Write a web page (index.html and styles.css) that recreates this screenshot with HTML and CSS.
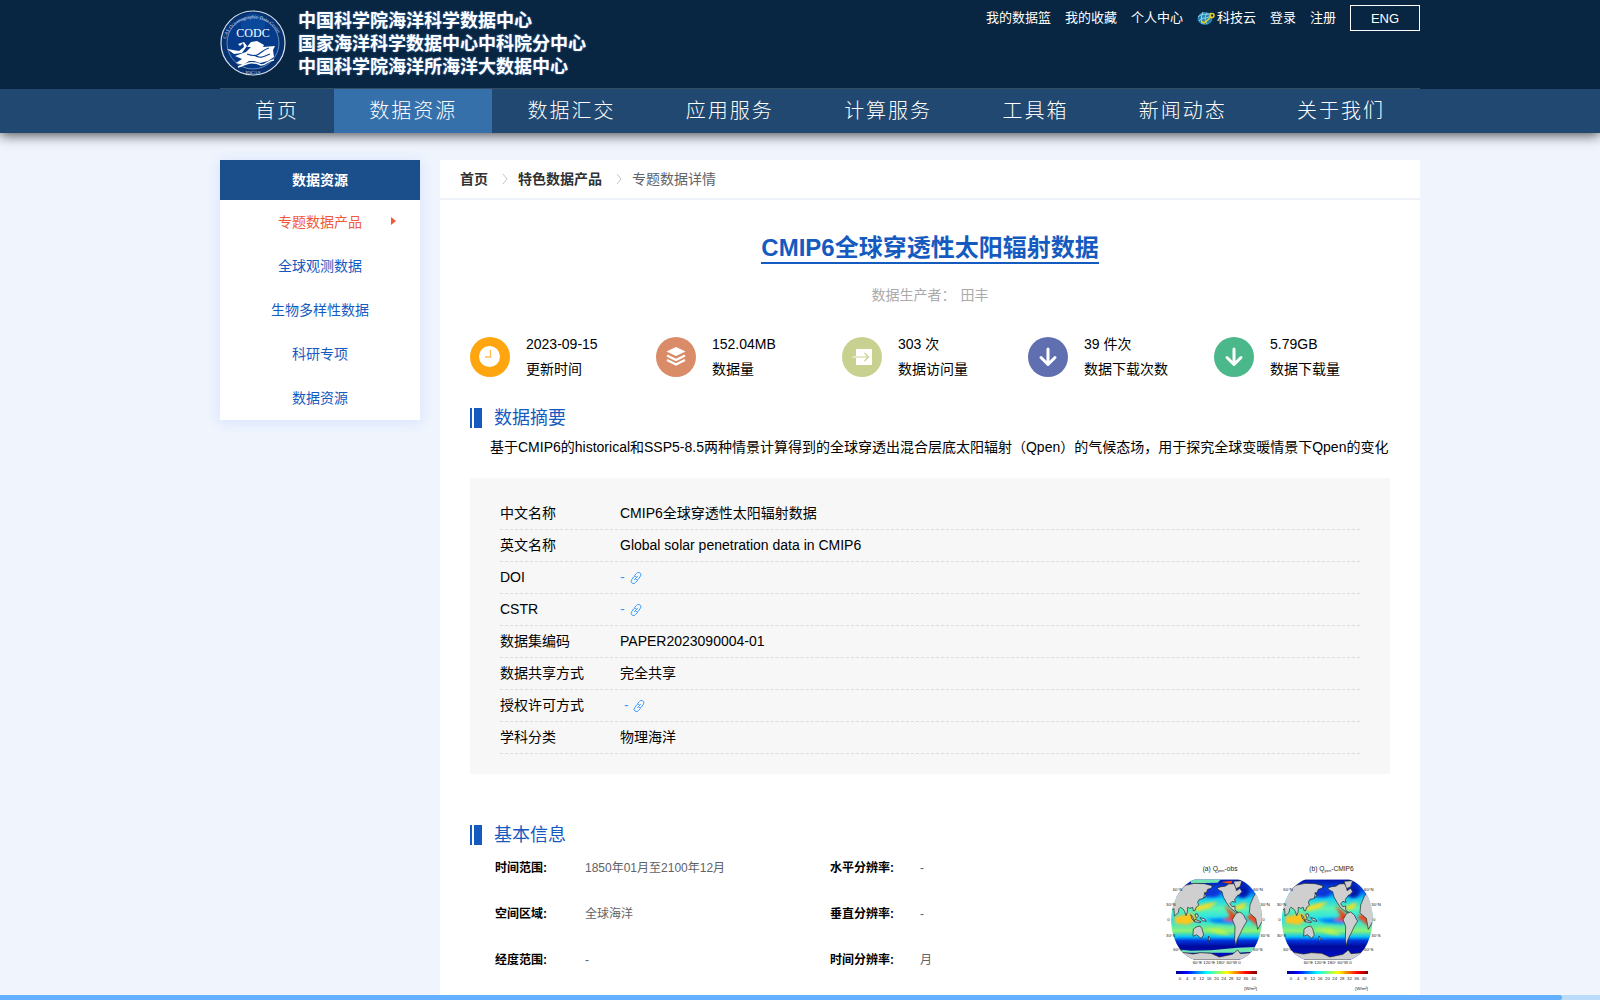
FILE: index.html
```html
<!DOCTYPE html>
<html lang="zh-CN">
<head>
<meta charset="utf-8">
<title>CMIP6全球穿透性太阳辐射数据</title>
<link rel="stylesheet" href="styles.css">
</head>
<body>
<svg class="sprite" aria-hidden="true">
  <symbol id="link" viewBox="0 0 12 12"><g fill="none" stroke="currentColor" stroke-width="1" stroke-linecap="round"><path d="M4.500 3.500 6.500 1.500a2.300 2.300 0 0 1 4 2.500L8.500 7a2.300 2.300 0 0 1-2.500.7"/><path d="M7.500 8.500 5.500 10.500a2.300 2.300 0 0 1-4-2.500L3.500 5a2.300 2.300 0 0 1 2.500-.7M4.500 7.500l3-3"/></g></symbol>
  <symbol id="down" viewBox="0 0 40 40"><path d="M20 12v14M13 20.500l7 7 7-7" fill="none" stroke="#fff" stroke-width="3" stroke-linecap="round" stroke-linejoin="round"/></symbol>
  <symbol id="land" viewBox="0 0 274 242">
    <path d="M7 65 20 39 42 18 70 12 100 13 124 19 121 27 110 30 106 40 100 40 104 49 96 58 85 60 80 68 83 78 75 84 72 94 67 94 65 84 57 87 50 84 49 99 45 109 41 96 36 89 28 84 24 88 22 100 10 110 9 88 3 92 1 78Z"/>
    <path d="M138 26 150 22 162 21 173 14 188 13 195 22 196 34 207 27 213 37 205 46 200 48 191 60 193 69 184 66 177 73 183 82 192 80 192 93 201 99 193 98 176 84 166 69 157 53 153 37 143 32Z"/>
    <path d="M187 6 213 4 207 22 195 28Z"/>
    <path d="M195 102 207 98 218 107 223 118 228 125 218 141 211 156 199 180 194 199 191 180 192 141 184 121Z"/>
    <path d="M247 53 258 36 271 63 274 90 274 125 260 150 254 117 243 108 235 100 237 77Z"/>
    <path d="M67 149 78 142 87 140 93 148 98 167 90 177 77 166 66 171Z"/>
    <path d="M59 106 65 112 70 126 63 119ZM72 105 79 103 82 111 76 117ZM87 115 100 118 106 126 94 124ZM72 120 90 127 88 130 70 127ZM101 41 105 49 98 57ZM112 170 118 178 113 187Z"/>
    <path d="M0 222 34 219 66 224 89 220 120 222 145 233 184 225 200 212 208 223 240 220 274 211 274 242H0Z"/>
  </symbol>
</svg>

<header class="header">
  <div class="wrap masthead">
    <a class="brand" href="#">
      <svg class="seal" viewBox="0 0 66 66" aria-hidden="true">
        <circle cx="33" cy="33" r="32" fill="#07316f" stroke="#d4dfec" stroke-width="1.200"/>
        <circle cx="33" cy="33" r="26" fill="#063b8b" stroke="#7e9fca" stroke-width=".8"/>
        <circle cx="33" cy="15" r="12" fill="#0d55ad" opacity=".5"/>
        <path id="arc" d="M6 29A28 28 0 0 1 60 29" fill="none"/>
        <g fill="#cbd9ec" font-family="Liberation Serif, serif" font-size="5">
          <text><textPath href="#arc">CAS Oceanographic Data Center</textPath></text>
          <text x="33" y="64" text-anchor="middle">IOCAS</text>
        </g>
        <text x="33" y="27" text-anchor="middle" fill="#fff" font-family="Liberation Serif, serif" font-size="12">CODC</text>
        <path fill="#fff" d="M27 37 31 32 37 31 44 35 43 37 55 36 53 40 54 47 48 51 40 53 34 51 29 51 23 55 16 53 22 49 15 46 26 42 31 37ZM7 39 19 41 24 37 23 33 20 36 18 34 24 32 27 36 22 43 14 44Z"/>
        <path fill="none" stroke="#063b8b" stroke-width="1.200" d="M49 38C40 40 40 49 27 44M50 44C43 47 40 49 34 45"/>
        <path fill="none" stroke="#fff" stroke-width="1.500" d="M18 57C27 54 30 50 41 55 47 55 48 50 54 50"/>
      </svg>
      <span class="names"><span>中国科学院海洋科学数据中心</span><span>国家海洋科学数据中心中科院分中心</span><span>中国科学院海洋所海洋大数据中心</span></span>
    </a>
    <nav class="tools" aria-label="用户">
      <a href="#">我的数据篮</a><a href="#">我的收藏</a><a href="#">个人中心</a>
      <a class="cloud" href="#"><svg width="18" height="15" viewBox="0 0 18 15" aria-hidden="true"><ellipse cx="8" cy="7.500" rx="7.500" ry="6.500" fill="#2183b4"/><path d="M1 6C6 1 10 5 14 2M2 10C6 5 8 9 13 5M6 1C4 5 4 9 5 13M10 2C7 7 8 10 10 13" fill="none" stroke="#9ad5e6" stroke-width="1"/><path d="M4 9.500 7 12 14 6" fill="none" stroke="#f2cc19" stroke-width="1.500"/><circle cx="15" cy="4.500" r="2" fill="none" stroke="#f2cc19" stroke-width="1.500"/></svg>科技云</a>
      <a href="#">登录</a><a href="#">注册</a>
      <button type="button">ENG</button>
    </nav>
  </div>
  <div class="navbar">
    <nav class="wrap nav" aria-label="主导航">
      <a href="#">首页</a><a class="active" href="#">数据资源</a><a href="#">数据汇交</a><a href="#">应用服务</a><a href="#">计算服务</a><a href="#">工具箱</a><a href="#">新闻动态</a><a href="#">关于我们</a>
    </nav>
  </div>
</header>

<div class="wrap page">
  <aside class="side">
    <h2>数据资源</h2>
    <a class="current" href="#">专题数据产品</a><a href="#">全球观测数据</a><a href="#">生物多样性数据</a><a href="#">科研专项</a><a href="#">数据资源</a>
  </aside>
  <main class="panel">
    <nav class="crumbs" aria-label="面包屑">
      <a href="#">首页</a>
      <svg width="6" height="12" viewBox="0 0 6 12" aria-hidden="true"><path d="M1 1l4 5-4 5"/></svg>
      <a href="#">特色数据产品</a>
      <svg width="6" height="12" viewBox="0 0 6 12" aria-hidden="true"><path d="M1 1l4 5-4 5"/></svg>
      <span>专题数据详情</span>
    </nav>
    <div class="body">
      <h1><span>CMIP6全球穿透性太阳辐射数据</span></h1>
      <p class="author"><span>数据生产者：</span><span>田丰</span></p>
      <ul class="stats">
        <li><svg viewBox="0 0 40 40" aria-hidden="true"><circle cx="20" cy="20" r="20" fill="#ffa50f"/><circle cx="19.500" cy="19.500" r="10.500" fill="#fff"/><path d="M20.500 13v7H15" fill="none" stroke="#ffbd4f" stroke-width="1.300"/></svg><p><span>2023-09-15</span><span>更新时间</span></p></li>
        <li><svg viewBox="0 0 40 40" aria-hidden="true"><circle cx="20" cy="20" r="20" fill="#da8b67"/><path d="M20 10 29.500 14.500 20 19 10.500 14.500Z" fill="#fff"/><path d="M11 18.500l9 4.500 9-4.500M11 23l9 4.500 9-4.500" fill="none" stroke="#fff" stroke-width="2.200"/></svg><p><span>152.04MB</span><span>数据量</span></p></li>
        <li><svg viewBox="0 0 40 40" aria-hidden="true"><circle cx="20" cy="20" r="20" fill="#c9d190"/><path d="M14 12h16v16H14z" fill="#fff"/><path d="M10.500 20H14" stroke="#fff"/><path d="M14 20h12M22.500 16l4 4-4 4" fill="none" stroke="#c9d190" stroke-width="1.200"/></svg><p><span>303 次</span><span>数据访问量</span></p></li>
        <li><svg viewBox="0 0 40 40" aria-hidden="true"><circle cx="20" cy="20" r="20" fill="#606fb0"/><use href="#down"/></svg><p><span>39 件次</span><span>数据下载次数</span></p></li>
        <li><svg viewBox="0 0 40 40" aria-hidden="true"><circle cx="20" cy="20" r="20" fill="#4ab88a"/><use href="#down"/></svg><p><span>5.79GB</span><span>数据下载量</span></p></li>
      </ul>
      <h2 class="section">数据摘要</h2>
      <p class="summary">基于CMIP6的historical和SSP5-8.5两种情景计算得到的全球穿透出混合层底太阳辐射（Qpen）的气候态场，用于探究全球变暖情景下Qpen的变化</p>
      <table class="facts">
        <tbody>
        <tr><th scope="row">中文名称</th><td>CMIP6全球穿透性太阳辐射数据</td></tr>
        <tr><th scope="row">英文名称</th><td>Global solar penetration data in CMIP6</td></tr>
        <tr><th scope="row">DOI</th><td><a href="#">- <svg><use href="#link"/></svg></a></td></tr>
        <tr><th scope="row">CSTR</th><td><a href="#">- <svg><use href="#link"/></svg></a></td></tr>
        <tr><th scope="row">数据集编码</th><td>PAPER2023090004-01</td></tr>
        <tr><th scope="row">数据共享方式</th><td>完全共享</td></tr>
        <tr><th scope="row">授权许可方式</th><td>&nbsp;<a href="#">- <svg><use href="#link"/></svg></a></td></tr>
        <tr><th scope="row">学科分类</th><td>物理海洋</td></tr>
        </tbody>
      </table>
      <h2 class="section">基本信息</h2>
      <div class="basic">
        <dl>
          <div><dt>时间范围:</dt><dd>1850年01月至2100年12月</dd></div>
          <div><dt>水平分辨率:</dt><dd>-</dd></div>
          <div><dt>空间区域:</dt><dd>全球海洋</dd></div>
          <div><dt>垂直分辨率:</dt><dd>-</dd></div>
          <div><dt>经度范围:</dt><dd>-</dd></div>
          <div><dt>时间分辨率:</dt><dd>月</dd></div>
        </dl>
        <svg class="maps" viewBox="0 0 720 450" role="img" aria-label="全球穿透性太阳辐射分布图">
          <defs>
            <clipPath id="globe"><path d="M72 0H202C225 8 244 25 258 51 278 93 278 143 258 190 244 220 224 236 200 242H74C48 235 29 218 16 192-5 146-5 96 17 52 31 26 49 9 72 0Z"/></clipPath>
            <linearGradient id="zones" x1="0" y1="0" x2="0" y2="1">
              <stop offset="0" stop-color="#0010a8"/><stop offset=".15" stop-color="#0058f0"/><stop offset=".24" stop-color="#12cdf4"/><stop offset=".36" stop-color="#60f4b0"/><stop offset=".5" stop-color="#20dff0"/><stop offset=".64" stop-color="#8cf273"/><stop offset=".71" stop-color="#0bc5f5"/><stop offset=".76" stop-color="#0035df"/><stop offset=".83" stop-color="#000a9c"/><stop offset="1" stop-color="#0010d0"/>
            </linearGradient>
            <linearGradient id="jet"><stop offset="0" stop-color="#00008f"/><stop offset=".13" stop-color="#00f"/><stop offset=".38" stop-color="#0ff"/><stop offset=".63" stop-color="#ff0"/><stop offset=".87" stop-color="#f00"/><stop offset="1" stop-color="#800000"/></linearGradient>
            <filter id="soft"><feGaussianBlur stdDeviation="4"/></filter>
            <g id="sea">
              <path d="M0 0H274V242H0Z" fill="url(#zones)"/>
              <g filter="url(#soft)">
                <ellipse cx="120" cy="40" rx="28" ry="14" fill="#0736d8"/>
                <ellipse cx="215" cy="36" rx="20" ry="20" fill="#001cb0"/>
                <path d="M105 120 160 116 196 124 186 134 130 130Z" fill="#007ff5"/>
                <path d="M70 84 110 72 140 67 115 86 78 96Z" fill="#f5dd25"/>
                <path d="M190 83 225 68 220 85 200 92Z" fill="#f5dd25"/>
                <path d="M10 112 62 101 80 120 50 137 12 132Z" fill="#ffc51b"/>
                <path d="M161 78 193 105 198 128 175 124 155 120 178 112Z" fill="#f03d11"/>
                <path d="M240 102 262 118 258 141 242 124 226 117Z" fill="#f64515"/>
                <path d="M100 147 150 148 181 168 142 164Z" fill="#b8f451"/>
              </g>
            </g>
          </defs>
          <g class="map-text">
            <text x="158" y="62" font-size="20">(a) Q<tspan dy="5" font-size="12">pen</tspan><tspan dy="-5">-obs</tspan></text>
            <text x="478" y="62" font-size="20">(b) Q<tspan dy="5" font-size="12">pen</tspan><tspan dy="-5">-CMIP6</tspan></text>
          </g>
          <g transform="translate(63 88)"><g clip-path="url(#globe)"><use href="#sea"/><path d="M60 0H150L140 10 60 12ZM0 208 60 214 120 213 200 205 274 202V216L200 220H0Z" fill="#6fe6b2"/><path d="M150 8 184 4 180 14Z" fill="#ef4a13"/><use href="#land" width="274" height="242" class="land"/></g></g>
          <g transform="translate(395 88)"><g clip-path="url(#globe)"><use href="#sea"/><use href="#land" width="274" height="242" class="land"/></g></g>
          <path d="M78 363h243v9H78z" fill="url(#jet)"/><path d="M411 363h243v9H411z" fill="url(#jet)"/>
          <g class="map-text" font-size="13">
            <text x="68" y="124">60°N</text><text x="48" y="168">30°N</text><text x="52" y="214">0</text><text x="48" y="260">30°S</text><text x="70" y="304">60°S</text>
            <text x="310" y="124">60°N</text><text x="331" y="168">30°N</text><text x="337" y="214">0</text><text x="331" y="260">30°S</text><text x="310" y="304">60°S</text>
            <text x="400" y="124">60°N</text><text x="380" y="168">30°N</text><text x="385" y="214">0</text><text x="380" y="260">30°S</text><text x="400" y="304">60°S</text>
            <text x="642" y="124">60°N</text><text x="664" y="168">30°N</text><text x="669" y="214">0</text><text x="664" y="260">30°S</text><text x="642" y="304">60°S</text>
            <text x="128" y="342">60°E 120°E 180° 60°W 0</text><text x="461" y="342">60°E 120°E 180° 60°W 0</text>
            <text x="86" y="389">0</text><text x="108" y="389">4</text><text x="130" y="389">8</text><text x="148" y="389">12</text><text x="170" y="389">16</text><text x="192" y="389">20</text><text x="214" y="389">24</text><text x="236" y="389">28</text><text x="258" y="389">32</text><text x="280" y="389">36</text><text x="304" y="389">40</text>
            <text x="419" y="389">0</text><text x="441" y="389">4</text><text x="463" y="389">8</text><text x="481" y="389">12</text><text x="503" y="389">16</text><text x="525" y="389">20</text><text x="547" y="389">24</text><text x="569" y="389">28</text><text x="591" y="389">32</text><text x="613" y="389">36</text><text x="635" y="389">40</text>
            <text x="321" y="421" text-anchor="end">[W/m²]</text><text x="654" y="421" text-anchor="end">[W/m²]</text>
          </g>
        </svg>
      </div>
    </div>
  </main>
</div>
<div class="scroll-track"><div class="scroll-thumb"></div></div>
</body>
</html>
```

FILE: styles.css
```css
* { box-sizing: border-box; }
body { margin: 0; background: #eff4fd; color: #000; font: 14px/20px "Liberation Sans", "Noto Sans CJK SC", sans-serif; }
h1, h2, p, ul, dl, dd { margin: 0; padding: 0; }
ul { list-style: none; }
a { color: inherit; text-decoration: none; }
.sprite { position: absolute; width: 0; height: 0; }
.wrap { width: 100%; max-width: 1200px; margin: 0 auto; }

.header { padding-left: 40px; background: #082642; box-shadow: 0 2px 12px rgba(0, 0, 0, .7); color: #fff; }
.masthead { display: flex; justify-content: space-between; align-items: flex-start; height: 89px; border-bottom: 1px solid #344e61; }
.brand { display: flex; gap: 12px; padding-top: 10px; }
.seal { width: 66px; height: 66px; }
.names { display: flex; flex-direction: column; font-size: 18px; font-weight: 700; line-height: 23px; text-shadow: 0 0 2px #5287c8; white-space: nowrap; }
.tools { display: flex; align-items: center; gap: 14px; padding-top: 5px; font-size: 13px; white-space: nowrap; }
.cloud { display: flex; align-items: center; gap: 2px; }
.tools button { width: 70px; height: 26px; padding: 0; border: 1px solid #fff; background: transparent; color: #fff; font: 13px "Liberation Sans", sans-serif; }
.navbar { margin-left: -40px; padding-left: 40px; background: #214870; }
.nav { display: flex; justify-content: space-between; height: 44px; white-space: nowrap; }
.nav a { padding: 0 35px; font-size: 20px; font-weight: 300; line-height: 44px; letter-spacing: 2px; }
.nav .active { background: #3570aa; }

.page { display: flex; align-items: flex-start; gap: 20px; max-width: 1240px; padding: 27px 0 0 40px; }
.side { flex: 0 0 200px; background: #fff; box-shadow: 0 2px 12px rgba(64, 128, 255, .15); color: #155bbf; text-align: center; }
.side h2 { background: #1b4f8b; color: #fff; font-size: 14px; line-height: 40px; }
.side a { display: block; line-height: 44px; }
.side .current { position: relative; color: #f05a3a; }
.side .current::after { content: ""; position: absolute; right: 24px; top: 17px; border: 4px solid transparent; border-left: 5px solid #f05a3a; border-right: 0; }

.panel { flex: 1; min-width: 0; background: #fff; }
.crumbs { display: flex; align-items: center; height: 40px; padding-left: 20px; border-bottom: 2px solid #eff3f9; color: #606266; }
.crumbs a { color: #303133; font-weight: 700; }
.crumbs svg { margin: 0 10px 0 14px; fill: none; stroke: #c0c4cc; }
.body { padding: 34px 30px 0; }
h1 { color: #155bbf; font-size: 24px; line-height: 28px; text-align: center; }
h1 span { display: inline-block; border-bottom: 2px solid #155bbf; }
.author { display: flex; justify-content: center; gap: 5px; margin-top: 21px; color: #aaa; }
.stats { display: grid; grid-template-columns: repeat(5, 186px); margin-top: 27px; }
.stats li { display: flex; align-items: center; gap: 16px; height: 50px; }
.stats svg { width: 40px; height: 40px; }
.stats p span { display: block; line-height: 25px; }
.section { display: flex; align-items: center; gap: 12px; height: 20px; margin-top: 26px; color: #155bbf; font-size: 18px; font-weight: 400; line-height: 18px; }
.section::before { content: ""; width: 12px; height: 20px; background: linear-gradient(90deg, #155bbf 2px, #fff 2px 4px, #155bbf 4px); }
.summary { margin: 9px 0 21px; padding-left: 20px; white-space: nowrap; }
.facts { display: block; padding: 20px 30px; background: #f7f7f7; }
.facts tbody { display: block; }
.facts tr { display: flex; height: 32px; border-bottom: 1px dashed #dcdcdc; }
.facts th { width: 120px; padding: 0; font-weight: 400; line-height: 30px; text-align: left; }
.facts td { padding: 0; line-height: 30px; }
.facts a { color: #409eff; }
.facts svg { width: 12px; height: 12px; margin-left: 1px; vertical-align: -2px; }
.facts + .section { margin-top: 51px; }
.basic { display: flex; justify-content: space-between; align-items: flex-start; }
.basic dl { display: grid; grid-template-columns: 335px 280px; padding-left: 25px; font-size: 12px; }
.basic dl div { display: flex; align-items: center; height: 46px; }
.basic dt { width: 90px; font-weight: 700; }
.basic dd { color: #606266; }
.maps { width: 240px; height: 150px; margin-top: 5px; }
.map-text { font-family: "Liberation Sans", sans-serif; fill: #222; }
.land { fill: #cfcfcf; stroke: #222; stroke-width: 2px; }

.scroll-track { position: fixed; left: 0; right: 0; bottom: 0; height: 5px; background: #bbdcfa; }
.scroll-thumb { width: 97.6%; height: 5px; border-radius: 0 3px 3px 0; background: #62b0ff; }
```
